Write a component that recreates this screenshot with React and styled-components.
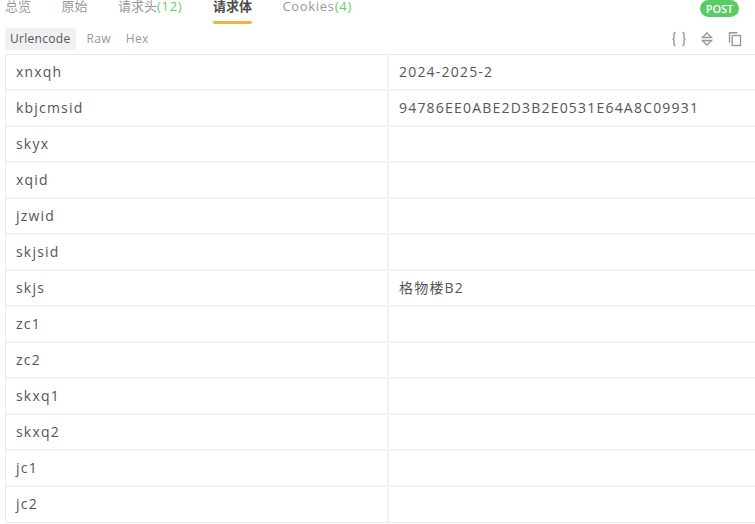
import React from 'react';
import styled, { createGlobalStyle } from 'styled-components';

const GlobalStyle = createGlobalStyle`
  html, body {
    margin: 0;
    padding: 0;
    background: #fff;
    overflow: hidden;
  }
  body {
    font-family: "Open Sans", "Noto Sans CJK SC", sans-serif;
  }
`;

const Page = styled.div`
  width: 755px;
  height: 524px;
  overflow: hidden;
`;

const TabBar = styled.div`
  height: 24px;
  display: flex;
  align-items: flex-start;
  justify-content: space-between;
  padding-left: 5px;
`;

const Tabs = styled.div`
  display: flex;
  gap: 30.5px;
`;

const Tab = styled.div`
  height: 27px;
  margin-top: -3px;
  font-size: 13px;
  line-height: 19px;
  color: ${({ $active }) => ($active ? '#4a4a4a' : '#999')};
  font-weight: ${({ $active }) => ($active ? 600 : 400)};
  border-bottom: 3px solid ${({ $active }) => ($active ? '#f5b041' : 'transparent')};
  border-radius: 2px;
  box-sizing: border-box;
`;

const Latin = styled.span`
  letter-spacing: 0.7px;
`;

const Count = styled.span`
  color: #5fd068;
  letter-spacing: 0.7px;
`;

const Badge = styled.div`
  margin-right: 16px;
  width: 39px;
  height: 17px;
  border-radius: 9px;
  background: #5ccb64;
  color: #fff;
  font-size: 11px;
  font-weight: 600;
  line-height: 17px;
  text-align: center;
`;

const Toolbar = styled.div`
  height: 30px;
  box-sizing: border-box;
  padding: 4px 12px 4px 5px;
  display: flex;
  align-items: center;
  justify-content: space-between;
`;

const Modes = styled.div`
  display: flex;
`;

const Mode = styled.div`
  height: 22px;
  line-height: 22px;
  padding: 0 5px;
  margin-right: ${({ $active }) => ($active ? '6px' : '5px')};
  font-size: 12px;
  letter-spacing: 0.3px;
  border-radius: 3px;
  color: ${({ $active }) => ($active ? '#555' : '#999')};
  background: ${({ $active }) => ($active ? '#f0f1f3' : 'transparent')};
`;

const Tools = styled.div`
  display: flex;
  gap: 12px;
  align-items: center;
  color: #999;
`;

const Table = styled.div`
  margin-left: 5px;
  border-top: 1px solid #eaeaea;
  border-left: 1px solid #eaeaea;
  border-bottom: 1px solid #eaeaea;
`;

const Row = styled.div`
  display: grid;
  grid-template-columns: 381px 1fr;
  height: 36px;
  box-sizing: border-box;
  border-bottom: 2px solid #f2f2f2;
  &:last-child {
    height: 35px;
    border-bottom: none;
  }
`;

const Cell = styled.div`
  padding-left: 10px;
  font-size: 14px;
  line-height: 34px;
  letter-spacing: 1.2px;
  color: #555;
  & + & {
    border-left: 2px solid #f2f2f2;
  }
`;

const rows = [
  ['xnxqh', '2024-2025-2'],
  ['kbjcmsid', '94786EE0ABE2D3B2E0531E64A8C09931'],
  ['skyx', ''],
  ['xqid', ''],
  ['jzwid', ''],
  ['skjsid', ''],
  ['skjs', '格物楼B2'],
  ['zc1', ''],
  ['zc2', ''],
  ['skxq1', ''],
  ['skxq2', ''],
  ['jc1', ''],
  ['jc2', ''],
];

const BracesIcon = () => (
  <svg width="16" height="16" viewBox="0 0 16 16" fill="none" stroke="currentColor" strokeWidth="1.4">
    <path d="M4.500 1.500C3 1.500 3 2.500 3 3.500v3C3 7.300 2.500 8 1.500 8c1 0 1.500.7 1.500 1.500v3c0 1 0 2 1.500 2" />
    <path d="M11.500 1.500c1.500 0 1.500 1 1.500 2v3c0 .8.500 1.500 1.500 1.500-1 0-1.500.7-1.500 1.500v3c0 1 0 2-1.500 2" />
  </svg>
);

const SortIcon = () => (
  <svg width="16" height="16" viewBox="0 0 16 16" fill="none" stroke="currentColor" strokeWidth="1.4">
    <path d="M3.500 6.500L8 1.800l4.500 4.700z" />
    <path d="M3.500 9.500L8 14.200l4.500-4.700z" />
  </svg>
);

const CopyIcon = () => (
  <svg width="16" height="16" viewBox="0 0 16 16" fill="none" stroke="currentColor" strokeWidth="1.4">
    <path d="M2.500 11.500V1.800h8" />
    <rect x="5.200" y="4.500" width="8.300" height="10" />
  </svg>
);

export default function App() {
  return (
    <Page>
      <GlobalStyle />
      <TabBar>
        <Tabs>
          <Tab>总览</Tab>
          <Tab>原始</Tab>
          <Tab>请求头<Count>(12)</Count></Tab>
          <Tab $active>请求体</Tab>
          <Tab><Latin>Cookies</Latin><Count>(4)</Count></Tab>
        </Tabs>
        <Badge>POST</Badge>
      </TabBar>
      <Toolbar>
        <Modes>
          <Mode $active>Urlencode</Mode>
          <Mode>Raw</Mode>
          <Mode>Hex</Mode>
        </Modes>
        <Tools>
          <BracesIcon />
          <SortIcon />
          <CopyIcon />
        </Tools>
      </Toolbar>
      <Table>
        {rows.map(([name, value]) => (
          <Row key={name}>
            <Cell>{name}</Cell>
            <Cell>{value}</Cell>
          </Row>
        ))}
      </Table>
    </Page>
  );
}
